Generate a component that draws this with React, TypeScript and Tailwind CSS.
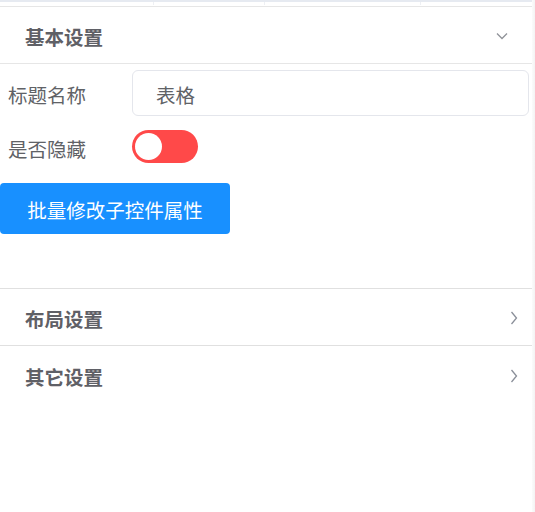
import { useState } from "react";

const font = { fontFamily: '"Noto Sans CJK SC", "Noto Sans", sans-serif' };

const Chevron = ({ open }: { open: boolean }) =>
  open ? (
    <svg width="12" height="8" viewBox="0 0 12 8" fill="none" className="mr-[24px] mt-[2px] text-[#909399]">
      <path d="M1 1.5 L6 6.5 L11 1.5" stroke="currentColor" strokeWidth="1.3" />
    </svg>
  ) : (
    <svg width="8" height="14" viewBox="0 0 8 14" fill="none" className="mr-[14px] mt-[2px] text-[#8a8f99]">
      <path d="M1.5 1 L6.5 7 L1.5 13" stroke="currentColor" strokeWidth="1.3" />
    </svg>
  );

const PanelHeader = ({ title, open, className }: { title: string; open: boolean; className?: string }) => (
  <div className={`flex h-[58px] items-center justify-between pl-[25px] ${className ?? ""}`}>
    <span className="pt-[3px] text-[19.5px] font-bold leading-none text-[#5f6066]">{title}</span>
    <Chevron open={open} />
  </div>
);

export default function App() {
  const [hidden, setHidden] = useState(false);
  return (
    <div className="flex h-[512px] w-[535px] bg-white" style={font}>
      <div className="flex flex-1 flex-col">
        <div className="relative h-[6px] border-t-2 border-[#e6eaf1]">
          <span className="absolute left-[153px] top-0 h-[3px] w-px bg-[#eef0f4]" />
          <span className="absolute left-[264px] top-0 h-[3px] w-px bg-[#eef0f4]" />
          <span className="absolute left-[420px] top-0 h-[3px] w-px bg-[#eef0f4]" />
        </div>
        <PanelHeader title="基本设置" open className="border-y border-[#e6e6e6]" />
        <div className="flex flex-col pt-[6px] pb-[54px] pr-[3px]">
          <div className="flex h-[46px] items-center">
            <label className="w-[132px] pl-[8px] pt-[3px] text-[19.5px] leading-none text-[#606266]">标题名称</label>
            <input
              defaultValue="表格"
              className="h-full flex-1 rounded-[6px] border border-[#e4e6ec] px-[23px] pt-[3px] text-[19.5px] text-[#606266] outline-none"
            />
          </div>
          <div className="mt-[13px] flex h-[34px] items-center">
            <label className="w-[132px] pl-[8px] pt-[5px] text-[19.5px] leading-none text-[#606266]">是否隐藏</label>
            <button
              onClick={() => setHidden(!hidden)}
              className={`flex h-[33px] w-[66px] items-center rounded-full px-[3px] ${
                hidden ? "justify-end bg-[#13ce66]" : "justify-start bg-[#ff4949]"
              }`}
            >
              <span className="h-[27px] w-[27px] rounded-full bg-white" />
            </button>
          </div>
          <button className="mt-[20px] h-[51px] w-[230px] rounded-[4px] bg-[#1890ff] pt-[3px] text-[19.5px] leading-none text-white">
            批量修改子控件属性
          </button>
        </div>
        <PanelHeader title="布局设置" open={false} className="border-y border-[#e0e0e0]" />
        <PanelHeader title="其它设置" open={false} />
      </div>
      <div className="w-[3px] bg-gradient-to-r from-[#fbfbfb] to-[#f3f3f3]" />
    </div>
  );
}
